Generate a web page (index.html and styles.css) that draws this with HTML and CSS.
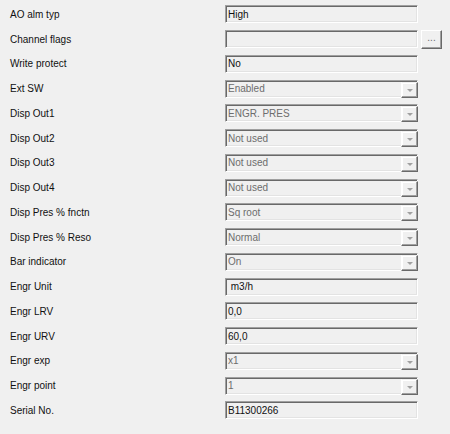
FILE: index.html
```html
<!DOCTYPE html>
<html lang="en">
<head>
    <meta charset="UTF-8">
    <meta name="viewport" content="width=device-width, initial-scale=1.0">
    <title>Device Parameters</title>
    <link rel="stylesheet" href="styles.css">
</head>
<body>

    <div class="params">
        <div class="row">
            <span class="label">AO alm typ</span>
            <div class="field"><span class="value">High</span></div>
        </div>
        <div class="row">
            <span class="label">Channel flags</span>
            <div class="field"><span class="value"></span></div>
            <button class="dots">...</button>
        </div>
        <div class="row">
            <span class="label">Write protect</span>
            <div class="field"><span class="value">No</span></div>
        </div>
        <div class="row">
            <span class="label">Ext SW</span>
            <div class="field combo"><span class="value">Enabled</span><span class="arrow"></span></div>
        </div>
        <div class="row">
            <span class="label">Disp Out1</span>
            <div class="field combo"><span class="value">ENGR. PRES</span><span class="arrow"></span></div>
        </div>
        <div class="row">
            <span class="label">Disp Out2</span>
            <div class="field combo"><span class="value">Not used</span><span class="arrow"></span></div>
        </div>
        <div class="row">
            <span class="label">Disp Out3</span>
            <div class="field combo"><span class="value">Not used</span><span class="arrow"></span></div>
        </div>
        <div class="row">
            <span class="label">Disp Out4</span>
            <div class="field combo"><span class="value">Not used</span><span class="arrow"></span></div>
        </div>
        <div class="row">
            <span class="label">Disp Pres % fnctn</span>
            <div class="field combo"><span class="value">Sq root</span><span class="arrow"></span></div>
        </div>
        <div class="row">
            <span class="label">Disp Pres % Reso</span>
            <div class="field combo"><span class="value">Normal</span><span class="arrow"></span></div>
        </div>
        <div class="row">
            <span class="label">Bar indicator</span>
            <div class="field combo"><span class="value">On</span><span class="arrow"></span></div>
        </div>
        <div class="row">
            <span class="label">Engr Unit</span>
            <div class="field"><span class="value"> m3/h</span></div>
        </div>
        <div class="row">
            <span class="label">Engr LRV</span>
            <div class="field"><span class="value">0,0</span></div>
        </div>
        <div class="row">
            <span class="label">Engr URV</span>
            <div class="field"><span class="value">60,0</span></div>
        </div>
        <div class="row">
            <span class="label">Engr exp</span>
            <div class="field combo"><span class="value">x1</span><span class="arrow"></span></div>
        </div>
        <div class="row">
            <span class="label">Engr point</span>
            <div class="field combo"><span class="value">1</span><span class="arrow"></span></div>
        </div>
        <div class="row">
            <span class="label">Serial No.</span>
            <div class="field"><span class="value">B11300266</span></div>
        </div>
    </div>

</body>
</html>
```

FILE: styles.css
```css
body {
    margin: 0;
    padding: 0;
    background: #f0f0f0;
    font-family: 'Liberation Sans', Arial, sans-serif;
    font-size: 10px;
    color: #111;
}

.params {
    padding: 2px 0 0 10px;
}

.row {
    display: flex;
    align-items: center;
    height: 24.75px;
}

.label {
    width: 215px;
}

/* sunken 3D box like a classic WinForms textbox */
.field {
    display: flex;
    align-items: center;
    width: 193px;
    height: 18px;
    box-sizing: border-box;
    border-top: 1px solid #a0a0a0;
    border-left: 1px solid #a0a0a0;
    border-right: 1px solid #ffffff;
    border-bottom: 1px solid #ffffff;
    box-shadow: inset 1px 1px 0 #696969, inset -1px -1px 0 #e3e3e3;
    background: #f0f0f0;
}

.value {
    flex: 1;
    padding-left: 2px;
    white-space: pre;
}

.combo .value {
    color: #6d6d6d;
}

/* drop-down button sits over the lower right corner of the box */
.arrow {
    position: relative;
    align-self: flex-end;
    width: 17px;
    height: 16px;
    margin: 0 -1px -1px 0;
    box-sizing: border-box;
    border-top: 1px solid #f0f0f0;
    border-left: 1px solid #ffffff;
    border-right: 1px solid #696969;
    border-bottom: 1px solid #696969;
    box-shadow: inset -1px -1px 0 #a0a0a0, inset 1px 1px 0 #ffffff;
    background: #f0f0f0;
}

.arrow::after {
    content: "";
    position: absolute;
    left: 5px;
    top: 6px;
    border-left: 3px solid transparent;
    border-right: 3px solid transparent;
    border-top: 3px solid #a0a0a0;
}

.dots {
    width: 21px;
    height: 19px;
    margin-left: 3px;
    padding: 0 0 4px 0;
    box-sizing: border-box;
    font-family: inherit;
    font-size: 10px;
    color: #6d6d6d;
    background: #f0f0f0;
    border-top: 1px solid #ffffff;
    border-left: 1px solid #ffffff;
    border-right: 1px solid #696969;
    border-bottom: 1px solid #696969;
    box-shadow: inset -1px -1px 0 #a0a0a0;
    border-radius: 0;
}
```
